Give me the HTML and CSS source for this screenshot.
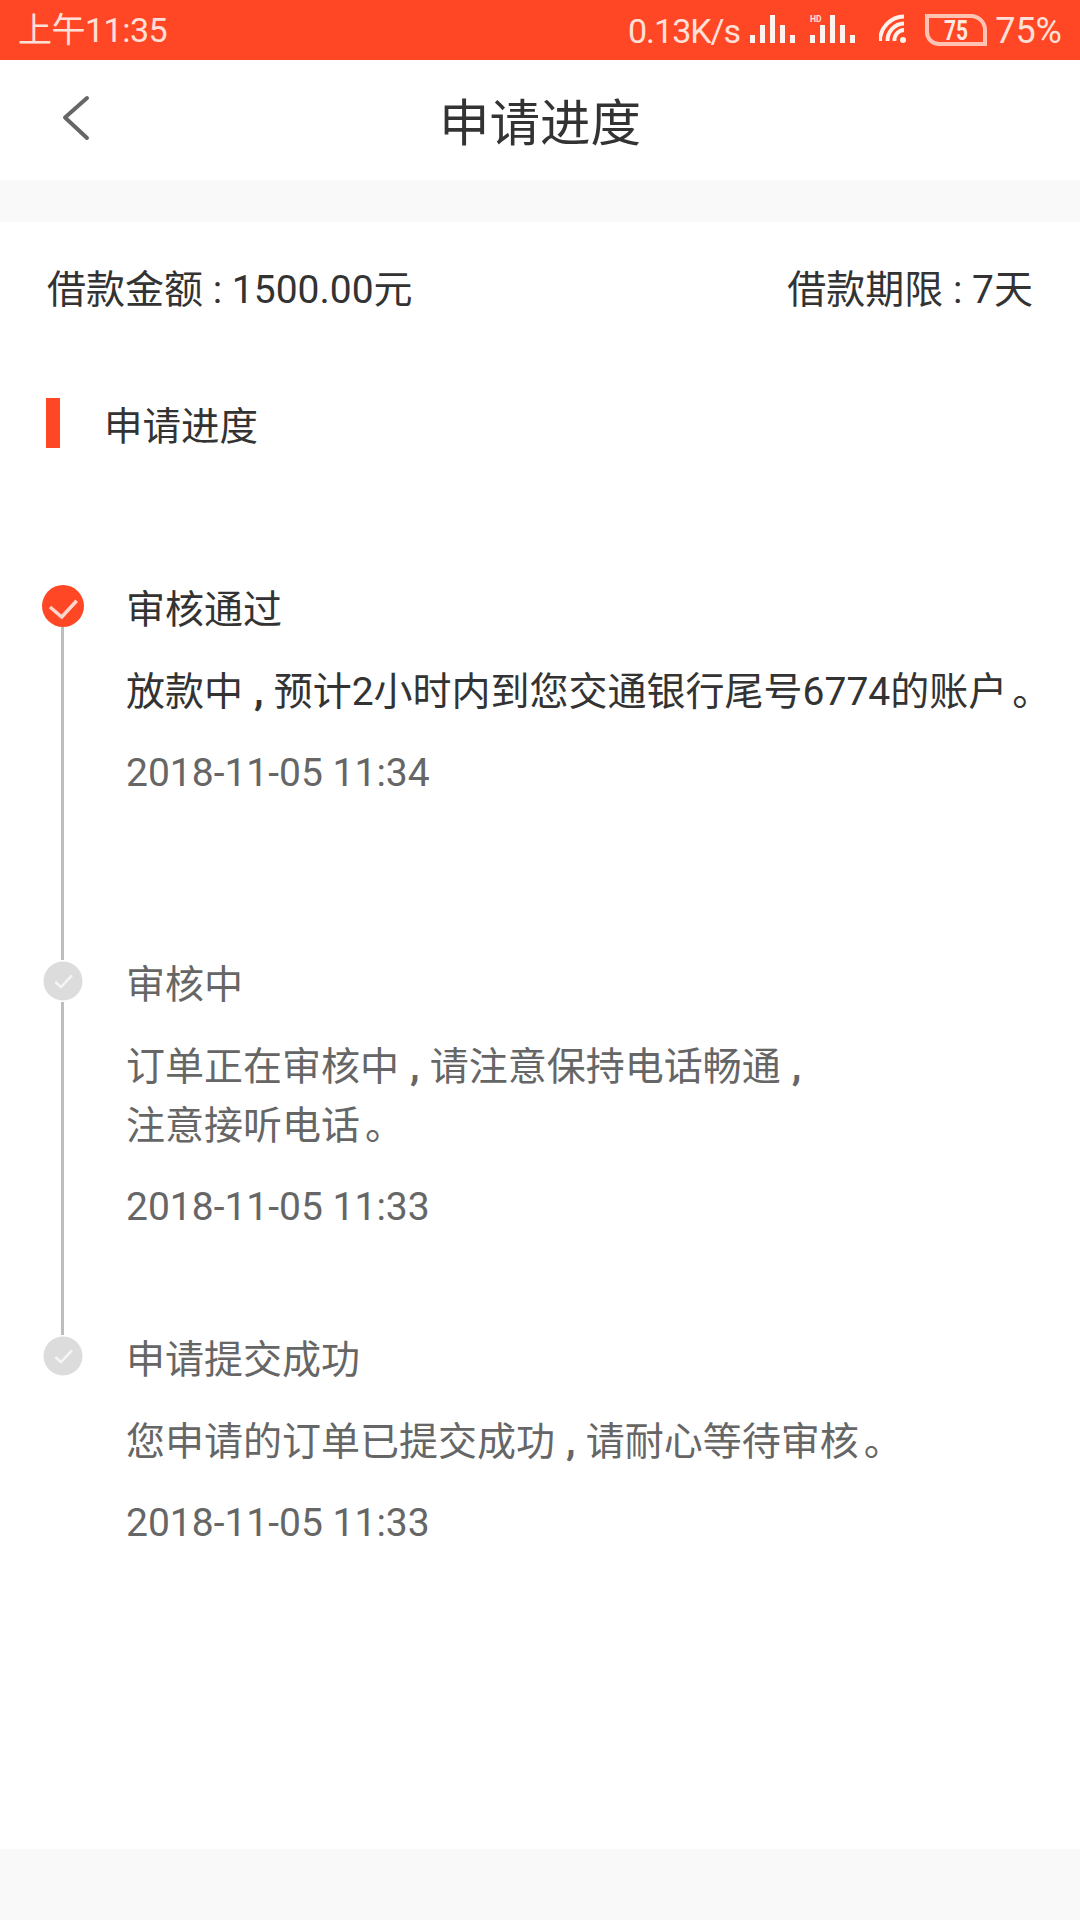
FILE: index.html
```html
<!DOCTYPE html>
<html lang="zh-CN">
<head>
    <meta charset="UTF-8">
    <meta name="viewport" content="width=device-width, initial-scale=1.0">
    <title>申请进度</title>
    <link rel="stylesheet" href="styles.css">
</head>
<body>

<div class="status-bar">
    <span class="status-time">上午11:35</span>
    <div class="status-right">
        <span class="status-speed">0.13K/s</span>
        <svg class="icon-signals" width="105" height="30" viewBox="0 0 105 30">
            <g class="bars">
                <rect x="0" y="20" width="5" height="8"/>
                <rect x="10" y="10" width="5" height="18"/>
                <rect x="20" y="0" width="5" height="28"/>
                <rect x="30" y="10" width="5" height="18"/>
                <rect x="40" y="20" width="5" height="8"/>
                <rect x="60" y="20" width="5" height="8"/>
                <rect x="70" y="10" width="5" height="18"/>
                <rect x="80" y="0" width="5" height="28"/>
                <rect x="90" y="10" width="5" height="18"/>
                <rect x="100" y="20" width="5" height="8"/>
            </g>
            <text class="hd-text" x="60" y="7">HD</text>
        </svg>
        <svg class="icon-wifi" width="30" height="32" viewBox="0 0 30 32" fill="none">
            <path d="M1 27 A24.5 24.5 0 0 1 25 2.5"/>
            <path d="M8.5 27 A17 17 0 0 1 25 9.5"/>
            <path d="M15.5 27 A10 10 0 0 1 25 16"/>
            <circle class="wifi-dot" cx="24" cy="26" r="3"/>
        </svg>
        <svg class="icon-battery" width="62" height="32" viewBox="0 0 62 32" fill="none">
            <path class="battery-shell" d="M2 2 H46 A14 14 0 0 1 60 16 V30 H14 A12 12 0 0 1 2 18 Z"/>
            <text class="battery-text" x="19" y="26" textLength="24" lengthAdjust="spacingAndGlyphs">75</text>
        </svg>
        <span class="status-percent">75%</span>
    </div>
</div>

<div class="nav-bar">
    <svg class="icon-back" width="30" height="48" viewBox="0 0 30 48" fill="none">
        <path d="M25 3 L3 22.5 L25 43"/>
    </svg>
    <span class="nav-title">申请进度</span>
</div>

<div class="gray-gap"></div>

<div class="main">
    <div class="summary">
        <span>借款金额 : 1500.00元</span>
        <span>借款期限 : 7天</span>
    </div>

    <div class="section-title">
        <div class="section-bar"></div>
        <span>申请进度</span>
    </div>

    <div class="timeline">
        <div class="step active">
            <div class="step-rail">
                <svg class="step-dot" width="42" height="42" viewBox="0 0 42 42" fill="none">
                    <circle class="dot-on" cx="21" cy="21" r="21"/>
                    <path class="check-on" d="M8 22 L19.7 32 L34.7 15.7"/>
                </svg>
                <div class="rail-line"></div>
            </div>
            <div class="step-body">
                <div class="step-title">审核通过</div>
                <div class="step-text">放款中<span class="comma">,</span>预计2小时内到您交通银行尾号6774的账户<span class="period">。</span></div>
                <div class="step-time">2018-11-05 11:34</div>
            </div>
        </div>

        <div class="step">
            <div class="step-rail">
                <svg class="step-dot" width="42" height="42" viewBox="0 0 42 42" fill="none">
                    <circle class="dot-off" cx="21" cy="21" r="19.5"/>
                    <path class="check-off" d="M13.3 22 L19 27 L30 15.3"/>
                </svg>
                <div class="rail-line"></div>
            </div>
            <div class="step-body">
                <div class="step-title">审核中</div>
                <div class="step-text">订单正在审核中<span class="comma">,</span>请注意保持电话畅通<span class="comma">,</span><br>注意接听电话<span class="period">。</span></div>
                <div class="step-time">2018-11-05 11:33</div>
            </div>
        </div>

        <div class="step">
            <div class="step-rail">
                <svg class="step-dot" width="42" height="42" viewBox="0 0 42 42" fill="none">
                    <circle class="dot-off" cx="21" cy="21" r="19.5"/>
                    <path class="check-off" d="M13.3 22 L19 27 L30 15.3"/>
                </svg>
            </div>
            <div class="step-body">
                <div class="step-title">申请提交成功</div>
                <div class="step-text">您申请的订单已提交成功<span class="comma">,</span>请耐心等待审核<span class="period">。</span></div>
                <div class="step-time">2018-11-05 11:33</div>
            </div>
        </div>
    </div>
</div>

<div class="bottom-gap"></div>

</body>
</html>
```

FILE: styles.css
```css
body {
    font-family: Roboto, 'Noto Sans CJK SC', sans-serif;
    background-color: #fff;
    color: #333;
    margin: 0;
    padding: 0;
    height: 1920px;
    display: flex;
    flex-direction: column;
    overflow: hidden;
}

/* status bar */
.status-bar {
    height: 60px;
    flex: none;
    background-color: #ff4726;
    color: #ffe0d8;
    font-size: 34px;
    line-height: 44px;
    display: flex;
    align-items: center;
    justify-content: space-between;
    padding: 0 18px;
}

.status-right {
    display: flex;
    align-items: center;
}

.status-time {
    letter-spacing: -0.5px;
}

.status-speed {
    letter-spacing: -1px;
    margin-top: 1px;
}

.icon-signals {
    margin-left: 10px;
}

.bars rect {
    fill: #fff3ef;
}

.hd-text {
    font-size: 8.5px;
    font-weight: 700;
    fill: #ffe0d8;
}

.icon-wifi {
    margin-left: 24px;
}

.icon-wifi path {
    stroke: #fff0eb;
    stroke-width: 4;
}

.wifi-dot {
    fill: #fff0eb;
}

.icon-battery {
    margin-left: 16px;
}

.battery-shell {
    stroke: #ffc3b4;
    stroke-width: 4;
}

.battery-text {
    font-size: 27px;
    font-weight: 700;
    fill: #ffe8e2;
}

.status-percent {
    margin-left: 8px;
    margin-top: 1px;
    font-size: 36px;
}

/* nav */
.nav-bar {
    height: 120px;
    flex: none;
    display: flex;
    align-items: center;
    justify-content: center;
    position: relative;
}

.icon-back {
    position: absolute;
    left: 62px;
    top: 35px;
}

.icon-back path {
    stroke: #666;
    stroke-width: 4;
    stroke-linecap: round;
    stroke-linejoin: round;
}

.nav-title {
    font-size: 50.5px;
    color: #333;
    margin-bottom: 3px;
}

.gray-gap {
    height: 42px;
    flex: none;
    background-color: #faf9f9;
}

.main {
    flex: 1;
}

.summary {
    height: 128px;
    display: flex;
    align-items: center;
    justify-content: space-between;
    padding: 0 47px;
    font-size: 39px;
}

.section-title {
    margin-top: 48px;
    height: 50px;
    display: flex;
    align-items: center;
    padding-left: 46px;
    font-size: 38.5px;
}

.section-bar {
    width: 14px;
    height: 50px;
    background-color: #ff4726;
    margin-right: 44px;
}

/* timeline */
.timeline {
    margin-top: 137px;
    padding-left: 42px;
}

.step {
    height: 375px;
    display: flex;
}

.step-rail {
    width: 42px;
    flex: none;
    display: flex;
    flex-direction: column;
}

.step-dot {
    flex: none;
    display: block;
}

.rail-line {
    flex: 1;
    width: 3px;
    margin-left: 19px;
    background-color: #bdbdbd;
}

.dot-on {
    fill: #ff4726;
}

.check-on {
    stroke: #ffd6cb;
    stroke-width: 3.5;
}

.dot-off {
    fill: #dcdcdc;
}

.check-off {
    stroke: #f5f5f5;
    stroke-width: 2.5;
}

.step-body {
    margin-left: 42px;
    font-size: 39px;
    color: #666;
}

.step-title {
    line-height: 46px;
    padding-top: 2px;
}

.step-text {
    margin-top: 30px;
    line-height: 59px;
}

.comma {
    margin: 0 10px 0 11px;
    font-weight: 700;
}

.period {
    margin-left: 5px;
}

.step-time {
    margin-top: 28px;
    line-height: 46px;
}

.active .step-title,
.active .step-text {
    color: #333;
}

.bottom-gap {
    height: 71px;
    flex: none;
    background-color: #faf9f9;
}
```
